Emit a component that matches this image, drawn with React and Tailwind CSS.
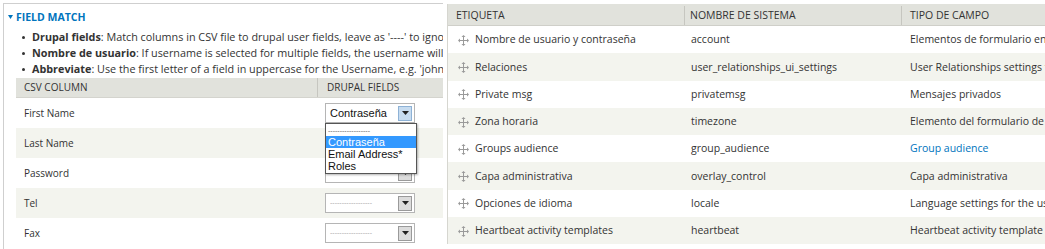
import React from "react";

const font = "font-['Open_Sans','DejaVu_Sans',sans-serif]";

const csvRows = ["First Name", "Last Name", "Password", "Tel", "Fax"];

const fields = [
  ["Nombre de usuario y contraseña", "account", "Elementos de formulario en cuenta de usuario"],
  ["Relaciones", "user_relationships_ui_settings", "User Relationships settings form elements"],
  ["Private msg", "privatemsg", "Mensajes privados"],
  ["Zona horaria", "timezone", "Elemento del formulario de la zona horaria"],
  ["Groups audience", "group_audience", "Group audience", true],
  ["Capa administrativa", "overlay_control", "Capa administrativa"],
  ["Opciones de idioma", "locale", "Language settings for the user account"],
  ["Heartbeat activity templates", "heartbeat", "Heartbeat activity template form elements"],
];

const Handle = () => (
  <svg width="11" height="11" viewBox="0 0 11 11" className="shrink-0">
    <path d="M5.5 1v9M1 5.5h9" stroke="#9a9a9a" strokeWidth="1" />
    <path d="M5.5 0l2 2h-4zM5.5 11l2-2h-4zM0 5.5l2-2v4zM11 5.5l-2-2v4z" fill="#9a9a9a" />
  </svg>
);

const Select = ({ value, active }) => (
  <div className="w-[90px] h-[20px] bg-white border border-[#b5b5b5] flex items-center justify-between pl-[4px] pr-[2px]">
    {value ? (
      <span className="font-['Liberation_Sans',sans-serif] text-[11px] text-[#111]">{value}</span>
    ) : (
      <span className="font-['Liberation_Sans',sans-serif] text-[7px] text-[#aaa]">------------------</span>
    )}
    <div
      className={`w-[14px] h-[15px] border flex items-center justify-center ${
        active ? "bg-[#c7dcf0] border-[#8eb2d6]" : "bg-[#dcdcdc] border-[#9a9a9a]"
      }`}
    >
      <svg width="7" height="4" viewBox="0 0 7 4">
        <path d="M0 0h7L3.5 4z" fill="#222" />
      </svg>
    </div>
  </div>
);

export default function App() {
  return (
    <div className={`w-[1045px] h-[249px] bg-white flex overflow-hidden ${font} text-[#333]`}>
      <div className="w-[443px] shrink-0 overflow-hidden pt-[3px] pl-[3px]">
        <div className="border-t border-l border-[#cfcfcf] h-[260px] pl-[4px] pt-[7px] w-[460px]">
          <div className="flex items-center gap-[3px] h-[12px]">
            <svg width="5" height="4" viewBox="0 0 5 4">
              <path d="M0 0h5L2.5 4z" fill="#0074bd" />
            </svg>
            <span className="text-[10.5px] font-bold text-[#0074bd] uppercase leading-none">Field Match</span>
          </div>
          <ul className="mt-[6px] pl-[14px] text-[10.8px] leading-[16px] whitespace-nowrap">
            {[
              ["Drupal fields", ": Match columns in CSV file to drupal user fields, leave as '----' to ignore"],
              ["Nombre de usuario", ": If username is selected for multiple fields, the username will be"],
              ["Abbreviate", ": Use the first letter of a field in uppercase for the Username, e.g. 'john' -> 'J'"],
            ].map(([b, t]) => (
              <li key={b} className="flex items-center gap-[7px]">
                <span className="w-[3px] h-[3px] shrink-0 rounded-full bg-[#333]" />
                <span className="shrink-0">
                  <b>{b}</b>
                  {t}
                </span>
              </li>
            ))}
          </ul>
          <div className="relative mt-[1px] ml-[8px] w-[440px] text-[10px]">
            <div className="flex h-[20px] bg-[#e1e2dc] border-b border-[#d4d4ce] items-center uppercase">
              <div className="w-[302px] shrink-0 pl-[8px] border-r border-[#c6c6c0] h-full flex items-center">CSV Column</div>
              <div className="pl-[9px]">Drupal Fields</div>
            </div>
            {csvRows.map((r, i) => (
              <div key={r} className={`flex h-[30px] items-center ${i % 2 ? "bg-[#f3f4ee]" : "bg-white"}`}>
                <div className="w-[302px] shrink-0 pl-[8px]">{r}</div>
                <div className="pl-[7px]">
                  <Select value={i === 0 ? "Contraseña" : null} active={i === 0} />
                </div>
              </div>
            ))}
            <div className="absolute left-[309px] top-[45px] w-[92px] bg-white border border-[#555] shadow-[1px_1px_2px_rgba(0,0,0,0.3)] font-['Liberation_Sans',sans-serif] text-[11px] text-[#111] leading-[12px] py-[1px]">
              <div className="pl-[2px] text-[7px] text-[#666] h-[11px] leading-[11px]">------------------</div>
              <div className="pl-[2px] bg-[#3399ff] text-white">Contraseña</div>
              <div className="pl-[2px]">Email Address*</div>
              <div className="pl-[2px]">Roles</div>
            </div>
          </div>
        </div>
      </div>

      <div className="ml-[4px] pt-[4px] flex-1 overflow-hidden">
        <div className="border-l border-[#d6d6d0] w-[640px] text-[10.5px] whitespace-nowrap">
          <div className="flex h-[22px] bg-[#e1e2dc] border-b border-[#cfcfc9] items-center uppercase pt-[2px]">
            <div className="w-[237px] shrink-0 pl-[8px] h-full flex items-center border-r border-[#c6c6c0]">Etiqueta</div>
            <div className="w-[217px] shrink-0 pl-[5px] h-full flex items-center border-r border-[#c6c6c0]">Nombre de sistema</div>
            <div className="pl-[8px]">Tipo de campo</div>
          </div>
          {fields.map(([label, name, type, link], i) => (
            <div key={name} className={`flex h-[27.3px] items-center pt-[1px] ${i % 2 ? "bg-[#f3f4ee]" : "bg-white"}`}>
              <div className="w-[237px] shrink-0 pl-[10px] flex items-center gap-[6px]">
                <Handle />
                <span>{label}</span>
              </div>
              <div className="w-[217px] shrink-0 pl-[6px]">{name}</div>
              <div className={`pl-[8px] ${link ? "text-[#0074bd]" : ""}`}>{type}</div>
            </div>
          ))}
        </div>
      </div>
    </div>
  );
}
